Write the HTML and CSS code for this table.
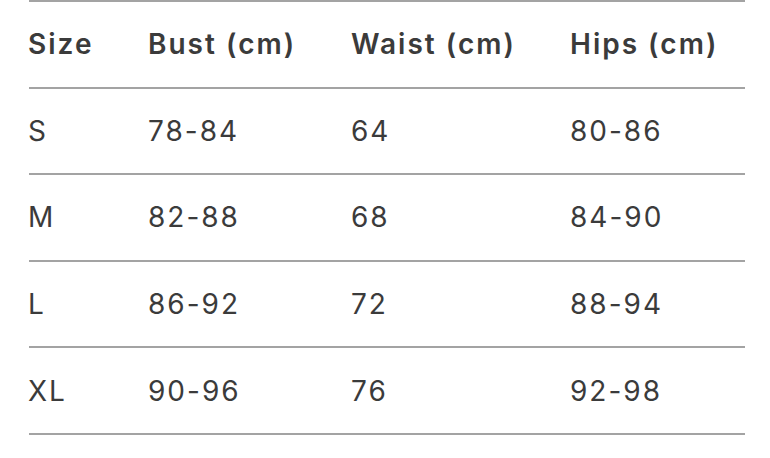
FILE: index.html
```html
<!DOCTYPE html>
<html>
<head>
<meta charset="utf-8">
<link rel="stylesheet" href="styles.css">
</head>
<body>
<div class="table">
  <div class="row head">
    <div class="cell">Size</div>
    <div class="cell">Bust (cm)</div>
    <div class="cell">Waist (cm)</div>
    <div class="cell">Hips (cm)</div>
  </div>
  <div class="row">
    <div class="cell">S</div>
    <div class="cell">78-84</div>
    <div class="cell">64</div>
    <div class="cell">80-86</div>
  </div>
  <div class="row">
    <div class="cell">M</div>
    <div class="cell">82-88</div>
    <div class="cell">68</div>
    <div class="cell">84-90</div>
  </div>
  <div class="row">
    <div class="cell">L</div>
    <div class="cell">86-92</div>
    <div class="cell">72</div>
    <div class="cell">88-94</div>
  </div>
  <div class="row last">
    <div class="cell">XL</div>
    <div class="cell">90-96</div>
    <div class="cell">76</div>
    <div class="cell">92-98</div>
  </div>
</div>
</body>
</html>
```

FILE: styles.css
```css
html, body {
  margin: 0;
  padding: 0;
  background: #ffffff;
}
body {
  font-family: Inter, "Liberation Sans", sans-serif;
  color: #3b3b3b;
  font-size: 28px;
}
.table {
  margin-left: 29px;
  width: 716px;
}
.row {
  display: grid;
  grid-template-columns: 120px 203px 219px 1fr;
  align-items: center;
  height: 84.6px;
  border-top: 2px solid #a3a3a3;
}
.row.last {
  border-bottom: 2px solid #a3a3a3;
}
.cell {
  margin-left: -1px;
  line-height: 1;
  letter-spacing: 2px;
}
.head .cell {
  font-weight: 600;
}
```
